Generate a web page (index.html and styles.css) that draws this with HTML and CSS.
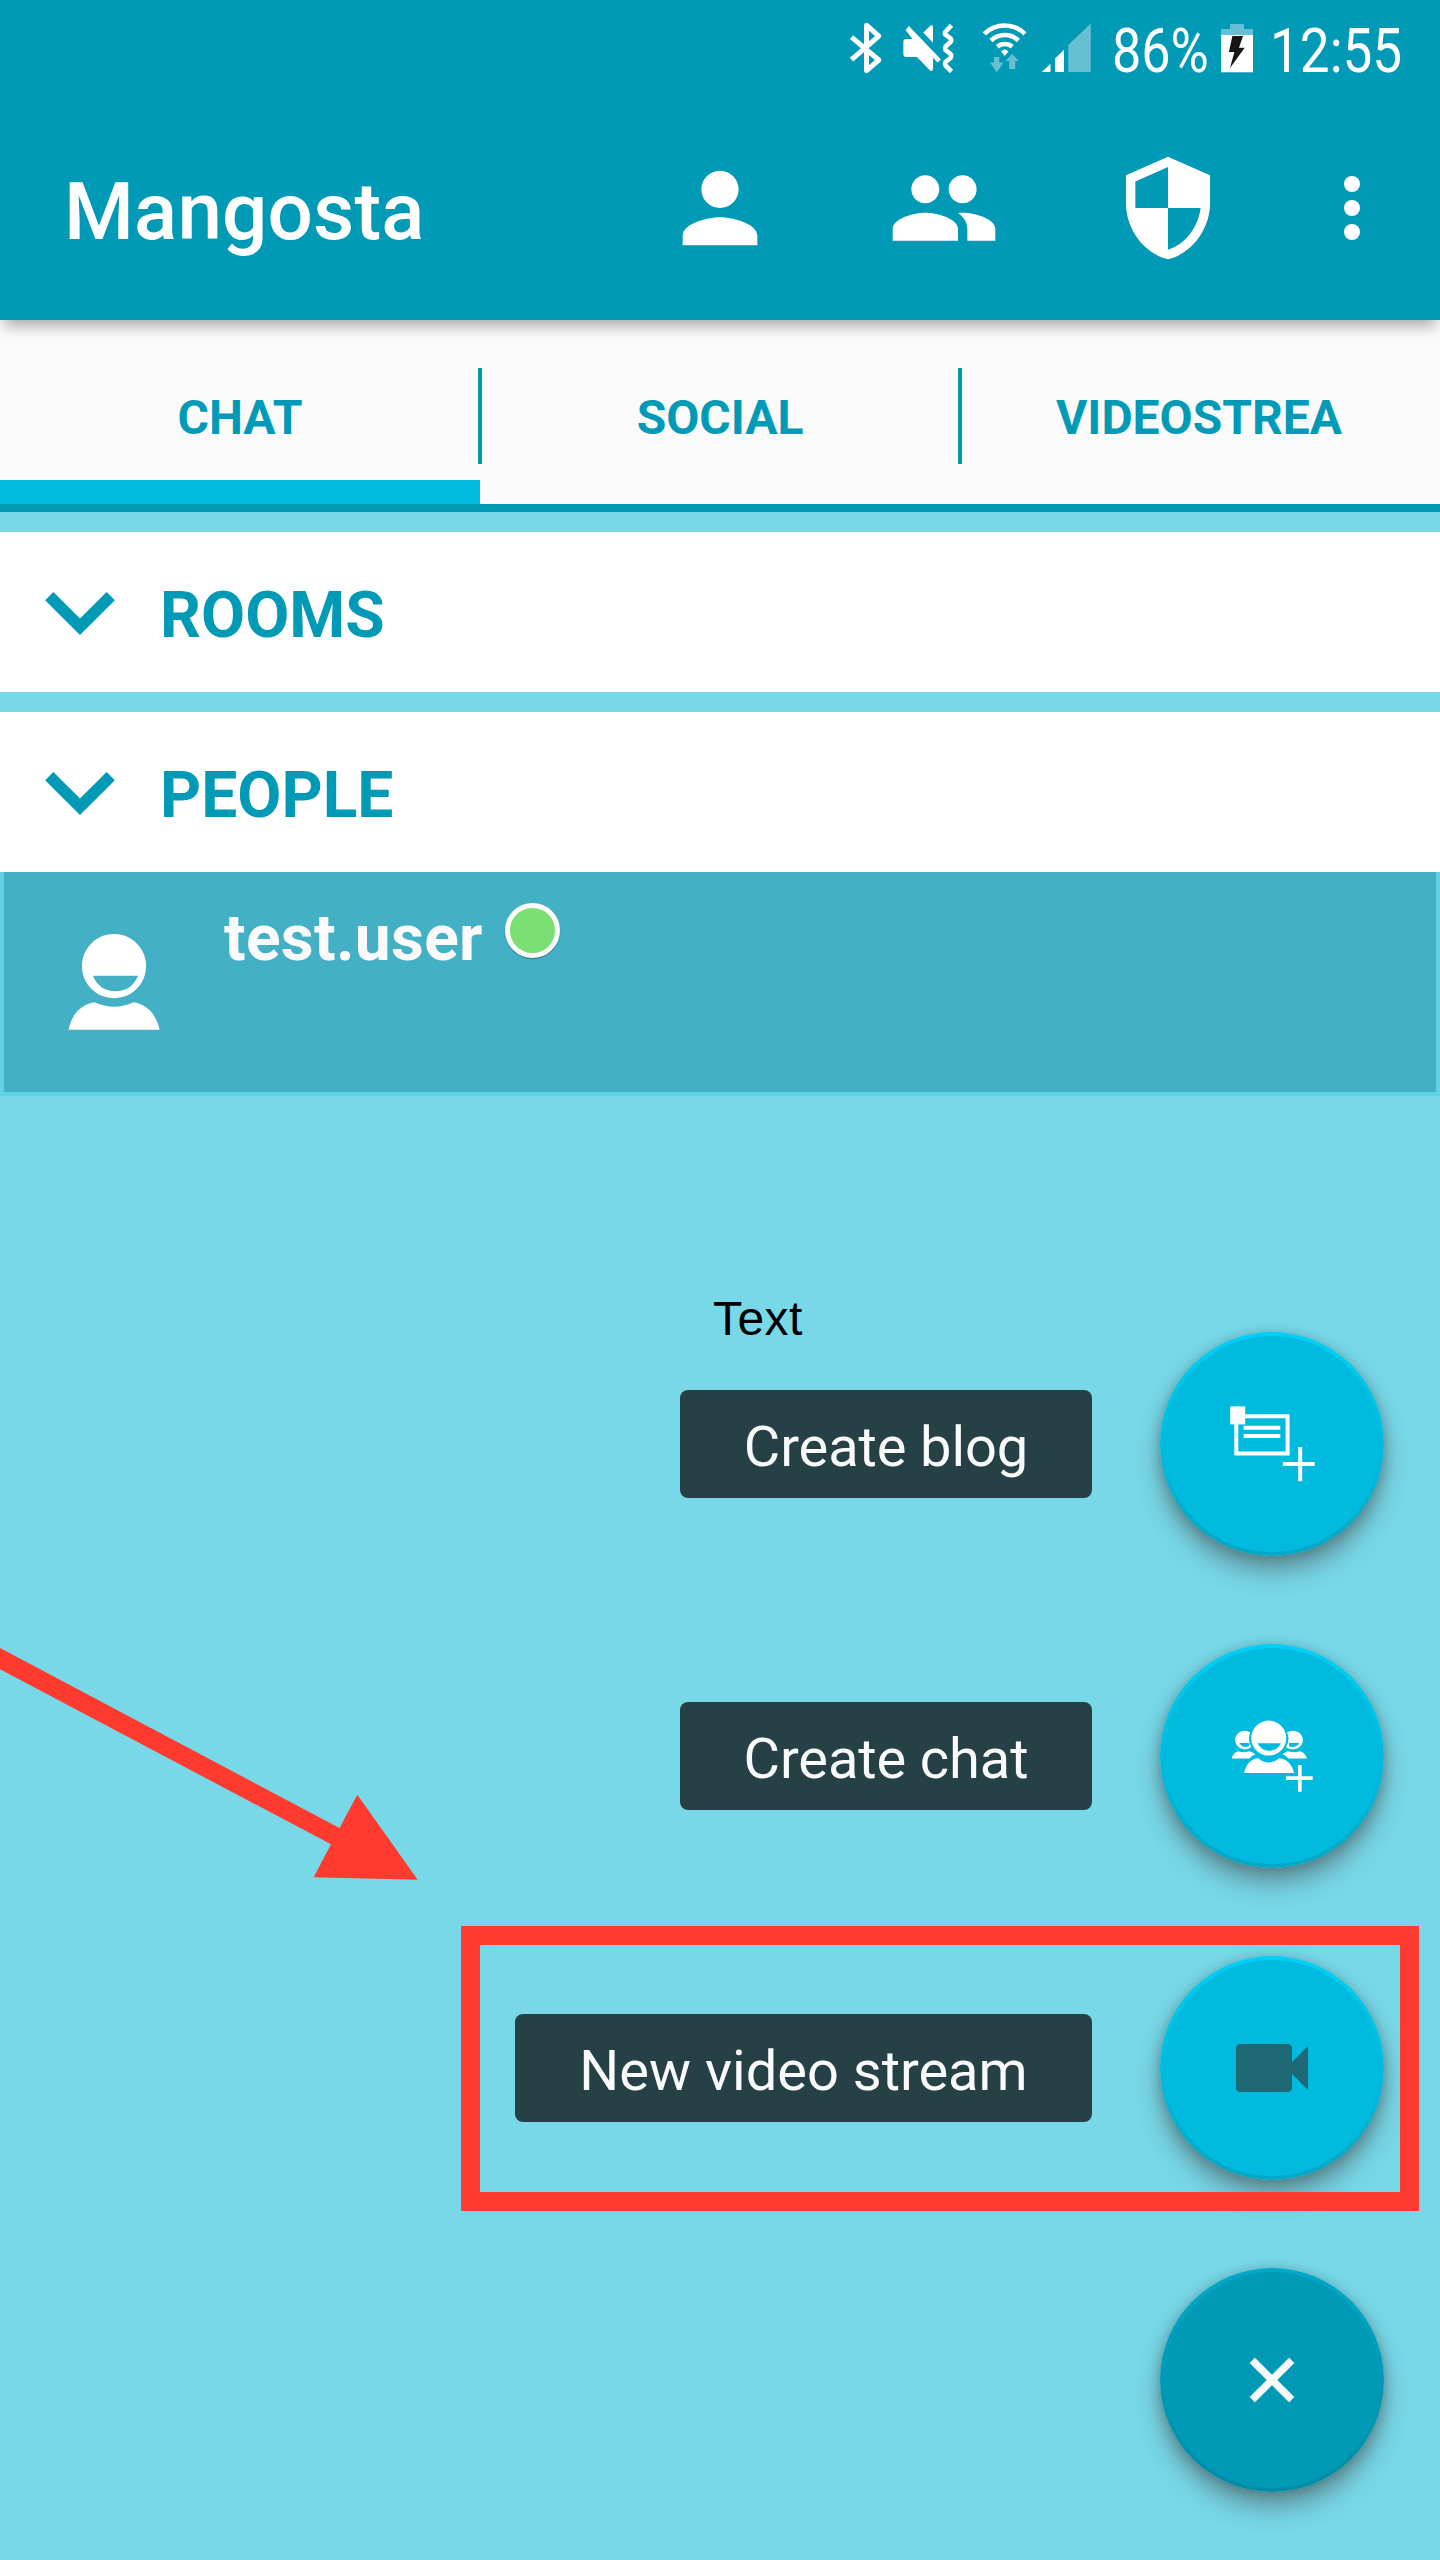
FILE: index.html
```html
<!DOCTYPE html>
<html lang="en">
<head>
<meta charset="utf-8">
<title>Mangosta</title>
<link rel="stylesheet" href="styles.css">
</head>
<body>
<div class="screen">
  <header class="top">
    <div class="status">
      <svg class="bluetooth" width="40" height="56" viewBox="846 20 40 56"><path d="M851.5 37.2 878.800 60 866.500 70.6V25.2L878.800 36.2 851.5 59.6" fill="none" stroke="#fff" stroke-width="5" stroke-linejoin="round"/></svg>
      <svg class="muted" width="56" height="56" viewBox="900 20 56 56"><path d="M908.9 25.9 941 59.400 937.500 62.500 933 57.700V69Q932.500 72 930 70.500L917 57H906Q903.400 57 903.400 54V42Q903.400 39 906 39H912.500L905.500 30ZM923.300 32.500 930 26Q933 23.500 933 28V42.800Z" fill="#fff"/><path d="M951.500 25.300 945 32.300Q944.500 34 946 35L950.500 38.500Q952 40.500 950.500 42L945.500 46.500Q944.500 48.300 945.500 50L950.500 54Q952 56 950.500 58L945.500 62Q944.500 64 945.500 65.500L951.500 71.500" fill="none" stroke="#fff" stroke-width="4.600"/></svg>
      <svg class="wifi" width="48" height="56" viewBox="980 20 48 56"><g fill="none" stroke="#fff" stroke-width="4.600"><path d="M984.300 33.800A29 29 0 0 1 1025 33.800"/><path d="M991 40.500A20 20 0 0 1 1018.400 40.500"/><path d="M997.300 46.800A11.500 11.500 0 0 1 1012.200 46.800"/></g><path d="M1001 51.500Q1004.700 47.500 1008.400 51.500L1004.700 56Z" fill="#fff"/><path d="M994 57H999.200V62.500H1003.500L996.800 72.500 990 62.500H994ZM1009.200 69V61H1005.300L1012 54 1018.900 61H1015.300V69Z" fill="#66bfd3"/></svg>
      <svg class="signal" width="52" height="56" viewBox="1040 20 52 56"><path d="M1068.300 72V45L1090.800 23.600V72Z" fill="#66bfd3"/><path d="M1055 72V58.500L1064 49.800V72ZM1041.800 72 1050.500 63.700V72Z" fill="#fff"/></svg>
      <span class="stat percent">86%</span>
      <svg class="battery" width="36" height="56" viewBox="1219 20 36 56"><path d="M1221 72.700V29H1230V24H1244V29H1253V72.700Z" fill="#66bfd3"/><path d="M1221 35H1253V72H1221Z" fill="#fff"/><path d="M1232.400 36H1243L1239 47.700H1244.700L1230 68 1234.400 52H1228.900Z" fill="#151515"/></svg>
      <span class="stat clock">12:55</span>
    </div>
    <div class="toolbar">
      <h1 class="title">Mangosta</h1>
      <nav class="actions">
        <svg width="112" height="112" viewBox="0 0 24 24"><path d="M12 12c2.210 0 4-1.790 4-4s-1.790-4-4-4-4 1.790-4 4 1.790 4 4 4zm0 2c-2.670 0-8 1.340-8 4v2h16v-2c0-2.660-5.330-4-8-4z"/></svg>
        <svg width="112" height="112" viewBox="0 0 24 24"><path d="M16 11c1.660 0 2.990-1.340 2.990-3S17.660 5 16 5s-3 1.340-3 3 1.340 3 3 3zm-8 0c1.660 0 2.990-1.340 2.990-3S9.660 5 8 5 5 6.340 5 8s1.340 3 3 3zm0 2c-2.330 0-7 1.170-7 3.500V19h14v-2.500c0-2.330-4.670-3.500-7-3.500zm8 0c-.290 0-.620.020-.970.050 1.160.840 1.970 1.970 1.970 3.450V19h6v-2.500c0-2.330-4.670-3.500-7-3.500z"/></svg>
        <svg width="112" height="112" viewBox="0 0 24 24"><path d="M12 1L3 5v6c0 5.550 3.840 10.740 9 12 5.160-1.260 9-6.450 9-12V5l-9-4zm0 10.990h7c-.530 4.120-3.280 7.790-7 8.940V12H5V6.300l7-3.110v8.800z"/></svg>
      </nav>
      <svg class="more" width="96" height="96" viewBox="0 0 24 24"><circle cx="12" cy="6" r="2"/><circle cx="12" cy="12" r="2"/><circle cx="12" cy="18" r="2"/></svg>
    </div>
  </header>

  <nav class="tabs">
    <div class="tab active">CHAT</div>
    <div class="tab">SOCIAL</div>
    <div class="tab">VIDEOSTREA</div>
  </nav>

  <main class="lists">
    <section class="group">
      <svg class="chevron" viewBox="6 7.840 12 7.410"><path d="M7.410 7.840L12 12.420l4.590-4.580L18 9.250l-6 6-6-6z"/></svg>
      <h2>ROOMS</h2>
    </section>
    <section class="group">
      <svg class="chevron" viewBox="6 7.840 12 7.410"><path d="M7.410 7.840L12 12.420l4.590-4.580L18 9.250l-6 6-6-6z"/></svg>
      <h2>PEOPLE</h2>
    </section>
    <article class="contact">
      <svg class="avatar" width="92" height="96" viewBox="68 934 92 96"><path fill-rule="evenodd" d="M114 934a32.100 32.100 0 1 0 .01 0ZM93 975.700H138C134 986 125.500 991.300 115.500 991.300S97 986 93 975.700Z"/><path d="M68.500 1029.700C72 1014 81 1004.500 94.500 1002.300Q114 1011.200 133.600 1002.300C147 1004.500 156 1014 159.600 1029.700Z"/></svg>
      <span class="name">test.user</span>
      <span class="presence"></span>
    </article>
  </main>

  <div class="fab-menu">
    <div class="fab-row">
      <span class="label">Create blog</span>
      <span class="fab"><svg width="96" height="96" viewBox="1224 1396 96 96"><path d="M1230.200 1406.400H1245.200V1424.400H1230.200Z"/><path d="M1236.300 1416.200H1287.600V1453.600H1236.300ZM1243.600 1427.700H1280.300M1243.600 1435.900H1280.300M1282.900 1464H1314.700M1300.200 1447V1481.300" fill="none" stroke="#fff" stroke-width="4"/></svg></span>
    </div>
    <div class="fab-row">
      <span class="label">Create chat</span>
      <span class="fab"><svg width="96" height="96" viewBox="1224 1708 96 96"><path fill-rule="evenodd" d="M1268.700 1720.600a17.500 17.500 0 1 0 .01 0ZM1257.500 1743.300H1281Q1277.500 1750.700 1269.300 1750.700T1257.500 1743.300Z"/><path d="M1244 1773C1246 1764.500 1251 1758.500 1258.300 1758.200Q1268.700 1767 1279.300 1758.200C1286.500 1758.500 1292 1764.500 1294.300 1773Z"/><path fill-rule="evenodd" d="M1250.400 1732.500Q1247.500 1730.400 1244.500 1730.700C1232 1732 1232 1748 1244.500 1749.200Q1248.500 1749.500 1251.300 1747Q1247 1739 1250.400 1732.500ZM1239.300 1743H1249Q1250 1745 1248.500 1746.300Q1242.500 1748.500 1239.300 1743ZM1287 1732.500Q1290 1730.400 1293.500 1730.700C1306 1732 1306 1748 1293.500 1749.200Q1289 1749.500 1286 1747Q1290.500 1739 1287 1732.500ZM1289 1743H1299.500Q1295.500 1748.500 1289 1746.300Z"/><path d="M1231.600 1758.400Q1233.200 1752.500 1238.200 1751.200Q1243.500 1753.500 1249 1751.200Q1252 1751.700 1255.500 1754.500Q1252 1755 1249.500 1758.400ZM1307 1758.400Q1305 1752.500 1300 1751.200Q1294 1753.500 1288 1751.200Q1285 1751.700 1282.400 1754.500Q1286 1755 1288.300 1758.400Z"/><path d="M1285.900 1778.200H1312.700M1299.800 1765V1791.700" stroke="#fff" stroke-width="3.700"/></svg></span>
    </div>
    <div class="fab-row">
      <span class="label wide">New video stream</span>
      <span class="fab"><svg width="96" height="96" viewBox="0 0 24 24"><path fill="#1f6876" d="M17 10.500V7c0-.550-.450-1-1-1H4c-.550 0-1 .450-1 1v10c0 .550.450 1 1 1h12c.550 0 1-.450 1-1v-3.500l4 4v-11l-4 4z"/></svg></span>
    </div>
    <div class="fab-row">
      <span class="fab close"><svg width="96" height="96" viewBox="0 0 96 96"><path d="M28.300 28.300 67.700 67.700M67.700 28.300 28.300 67.700" stroke="#fafafa" stroke-width="7.500"/></svg></span>
    </div>
  </div>

  <div class="note">Text</div>
  <div class="highlight"></div>
  <svg class="arrow" width="420" height="240" viewBox="0 1645 420 240"><path d="M0 1648 339.500 1828 357.300 1794.700 417.700 1879.800 313.700 1877.300 331 1844.300 0 1669.300Z"/></svg>
</div>
</body>
</html>
```
FILE: styles.css
```css
body {
  margin: 0;
  font-family: Roboto, "Liberation Sans", sans-serif;
}

svg {
  display: block;
  flex: none;
  fill: #fff;
}

.screen {
  position: relative;
  display: flex;
  flex-direction: column;
  width: 1440px;
  height: 2560px;
  overflow: hidden;
  background: #78d8e8;
}

/* Status bar and toolbar */
.top {
  position: relative;
  z-index: 1;
  height: 320px;
  flex: none;
  background: #009ab6;
  box-shadow: 0 10px 14px -4px rgba(0, 0, 0, 0.32);
}

.status {
  display: flex;
  align-items: center;
  height: 96px;
  padding-left: 846px;
}

.muted { margin-left: 14px; }
.wifi { margin-left: 24px; }
.signal { margin-left: 12px; }

.stat {
  flex: none;
  height: 90px;
  padding-top: 6px;
  color: #fff;
  font-size: 61px;
  line-height: 90px;
  white-space: nowrap;
  transform: scaleX(0.87);
  transform-origin: 0 0;
}

.percent {
  width: 107px;
  margin-left: 20px;
  transform: scaleX(0.855);
}

.clock {
  width: 150px;
  margin-left: 15px;
}

.toolbar {
  display: flex;
  align-items: center;
  height: 224px;
  padding-left: 64px;
}

.title {
  width: 600px;
  margin: 0;
  padding-top: 7px;
  color: #fff;
  font-size: 80px;
  font-weight: 500;
  letter-spacing: 0.150px;
  line-height: 100px;
}

.actions {
  display: flex;
  gap: 112px;
}

.more { margin-left: 80px; }

/* Tabs */
.tabs {
  display: flex;
  flex: none;
  height: 184px;
  border-bottom: 8px solid #009ab6;
  background: #fafafa;
}

.tab {
  position: relative;
  box-sizing: border-box;
  width: 480px;
  padding-top: 11px;
  color: #009ab6;
  font-size: 48px;
  font-weight: 700;
  line-height: 174px;
  text-align: center;
}

.tab:last-child { padding-right: 2px; }

.tab.active { box-shadow: inset 0 -24px #00bbde; }

.tab + .tab::before {
  content: "";
  position: absolute;
  top: 48px;
  left: -2px;
  width: 4px;
  height: 96px;
  background: #009ab6;
}

/* Expandable groups */
.group {
  display: flex;
  align-items: center;
  height: 160px;
  margin-top: 20px;
  padding-left: 45px;
  gap: 45px;
  background: #fff;
}

.chevron {
  width: 70px;
  height: 43px;
  margin-top: 3px;
  fill: #009ab6;
}

.group h2 {
  margin: 0;
  padding-top: 8px;
  color: #009ab6;
  font-size: 64px;
  font-weight: 700;
  line-height: 80px;
}

.contact {
  display: flex;
  box-sizing: border-box;
  height: 224px;
  padding-left: 64px;
  border: solid #5fd2e5;
  border-width: 0 4px 4px;
  background: #44b0c6;
}

.avatar { margin-top: 62px; }

.name {
  margin-top: 27px;
  margin-left: 64px;
  color: #fafafa;
  font-size: 64px;
  font-weight: 700;
  letter-spacing: 0.300px;
  line-height: 80px;
}

.presence {
  box-sizing: border-box;
  width: 55px;
  height: 55px;
  margin-top: 31px;
  margin-left: 22px;
  border: 5.500px solid #fafafa;
  border-radius: 50%;
  background: #7be073;
  box-shadow: 0 1px 1px rgba(0, 60, 60, 0.5);
}

/* Floating menu */
.fab-menu {
  position: absolute;
  right: 56px;
  bottom: 68px;
  display: flex;
  flex-direction: column;
  align-items: flex-end;
  gap: 88px;
}

.fab-row {
  display: flex;
  align-items: center;
  gap: 68px;
}

.label {
  box-sizing: border-box;
  width: 412px;
  height: 108px;
  padding-top: 6px;
  border-radius: 8px;
  background: #254146;
  color: #fafafa;
  font-size: 56px;
  line-height: 102px;
  text-align: center;
  letter-spacing: -0.100px;
}

.label.wide {
  width: 577px;
  letter-spacing: 0;
}

.fab {
  position: relative;
  display: flex;
  align-items: center;
  justify-content: center;
  width: 224px;
  height: 224px;
  border-radius: 50%;
  background:
    radial-gradient(circle, #00bbde 107.500px, transparent 108.500px),
    linear-gradient(#00cff5, #00bbde 50%, #00a7c7);
  box-shadow: 0 16px 24px rgba(60, 60, 60, 0.42), 0 2px 12px rgba(60, 60, 60, 0.34);
}

.fab.close {
  background:
    radial-gradient(circle, #009ab6 107.500px, transparent 108.500px),
    linear-gradient(#00a9c8, #009ab6 50%, #008ba5);
}

/* Annotations */
.note {
  position: absolute;
  top: 1291px;
  left: 713px;
  color: #000;
  font-family: "Liberation Sans", sans-serif;
  font-size: 48px;
  letter-spacing: 0.400px;
  line-height: 56px;
}

.highlight {
  position: absolute;
  top: 1926px;
  left: 461px;
  box-sizing: border-box;
  width: 958px;
  height: 285px;
  border: 19px solid #ff3b2f;
}

.arrow {
  position: absolute;
  top: 1645px;
  left: 0;
  fill: #ff3b2f;
}
```
